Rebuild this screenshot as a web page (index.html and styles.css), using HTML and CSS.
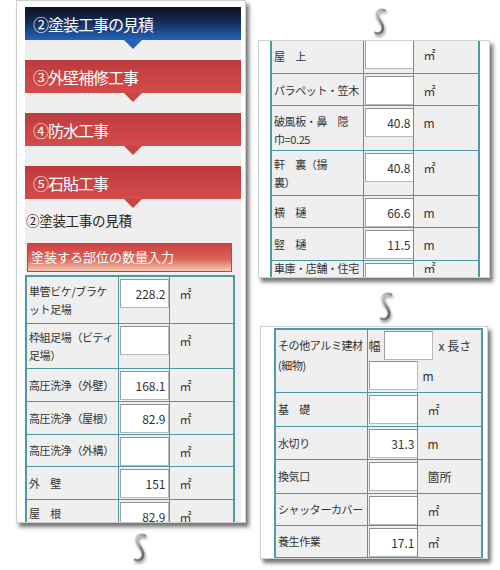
FILE: index.html
```html
<!DOCTYPE html>
<html lang="ja">
<head>
<meta charset="utf-8">
<title>塗装工事の見積</title>
<link rel="stylesheet" href="styles.css">
</head>
<body>
<div class="page">
  <div class="col col-left">
    <div class="panel panel-main">
      <div class="inner">
        <div class="step step-blue">②塗装工事の見積</div>
        <div class="step step-red">③外壁補修工事</div>
        <div class="step step-red">④防水工事</div>
        <div class="step step-red step-last">⑤石貼工事</div>
        <div class="subtitle">②塗装工事の見積</div>
        <div class="section-bar">塗装する部位の数量入力</div>
        <table class="qty qty-main">
          <colgroup><col class="c-lbl"><col class="c-inp"><col class="c-unit"></colgroup>
          <tr class="h47"><td class="lbl">単管ビケ/ブラケ<br>ット足場</td><td class="inp"><div class="box">228.2</div></td><td class="unit">㎡</td></tr>
          <tr class="h45"><td class="lbl">枠組足場（ビティ<br>足場）</td><td class="inp"><div class="box"></div></td><td class="unit">㎡</td></tr>
          <tr class="h33"><td class="lbl">高圧洗浄（外壁）</td><td class="inp"><div class="box">168.1</div></td><td class="unit">㎡</td></tr>
          <tr class="h33"><td class="lbl">高圧洗浄（屋根）</td><td class="inp"><div class="box">82.9</div></td><td class="unit">㎡</td></tr>
          <tr class="h32"><td class="lbl">高圧洗浄（外構）</td><td class="inp"><div class="box"></div></td><td class="unit">㎡</td></tr>
          <tr class="h33"><td class="lbl">外　壁</td><td class="inp"><div class="box">151</div></td><td class="unit">㎡</td></tr>
          <tr class="h33"><td class="lbl lbl-last">屋　根</td><td class="inp"><div class="box">82.9</div></td><td class="unit">㎡</td></tr>
        </table>
      </div>
    </div>
    <svg class="squig squig-left" viewBox="0 0 16 30" width="16" height="30"><defs><linearGradient id="sg" x1="0" y1="0" x2="1" y2="1"><stop offset="0" stop-color="#dcdcdc"/><stop offset="0.5" stop-color="#8e8e8e"/><stop offset="1" stop-color="#555"/></linearGradient></defs><path d="M13 2.5 C 8 0.5, 3 3, 5 8.5 C 7 13.5, 12 17, 11 22.5 C 10 27.5, 5 28, 3 26.5" fill="none" stroke="url(#sg)" stroke-width="2.6" stroke-linecap="round"/></svg>
  </div>
  <div class="col col-right">
    <svg class="squig squig-top" viewBox="0 0 16 30" width="16" height="28"><path d="M13 2.5 C 8 0.5, 3 3, 5 8.5 C 7 13.5, 12 17, 11 22.5 C 10 27.5, 5 28, 3 26.5" fill="none" stroke="url(#sg)" stroke-width="2.6" stroke-linecap="round"/></svg>
    <div class="panel panel-b">
      <table class="qty qty-b">
        <colgroup><col class="c-lbl"><col class="c-inp2"><col class="c-unit2"></colgroup>
        <tr class="h36"><td class="lbl">屋　上</td><td class="inp"><div class="box"></div></td><td class="unit">㎡</td></tr>
        <tr class="h32"><td class="lbl">パラペット・笠木</td><td class="inp"><div class="box"></div></td><td class="unit">㎡</td></tr>
        <tr class="h45"><td class="lbl lbl-low">破風板・鼻　隠<br>巾=0.25</td><td class="inp"><div class="box">40.8</div></td><td class="unit">m</td></tr>
        <tr class="h45"><td class="lbl">軒　裏（揚<br>裏）</td><td class="inp"><div class="box">40.8</div></td><td class="unit">㎡</td></tr>
        <tr class="h32"><td class="lbl">横　樋</td><td class="inp"><div class="box">66.6</div></td><td class="unit">m</td></tr>
        <tr class="h33"><td class="lbl">竪　樋</td><td class="inp"><div class="box">11.5</div></td><td class="unit">m</td></tr>
        <tr class="h33"><td class="lbl lbl-top">車庫・店舗・住宅</td><td class="inp"><div class="box"></div></td><td class="unit unit-top">㎡</td></tr>
      </table>
    </div>
    <svg class="squig squig-mid" viewBox="0 0 16 30" width="16" height="30"><path d="M13 2.5 C 8 0.5, 3 3, 5 8.5 C 7 13.5, 12 17, 11 22.5 C 10 27.5, 5 28, 3 26.5" fill="none" stroke="url(#sg)" stroke-width="2.6" stroke-linecap="round"/></svg>
    <div class="panel panel-c">
      <table class="qty qty-c">
        <colgroup><col class="c-lbl"><col class="c-inp2"><col class="c-unit3"></colgroup>
        <tr class="h63"><td class="lbl lbl-first">その他アルミ建材<br>(細物)</td>
          <td class="inp wide" colspan="2">
            <div class="line line1"><span class="txt">幅</span><div class="box"></div><span class="txt">x 長さ</span></div>
            <div class="line line2"><div class="box"></div><span class="txt">m</span></div>
          </td></tr>
        <tr class="h34"><td class="lbl">基　礎</td><td class="inp"><div class="box"></div></td><td class="unit">㎡</td></tr>
        <tr class="h33"><td class="lbl">水切り</td><td class="inp"><div class="box">31.3</div></td><td class="unit">m</td></tr>
        <tr class="h34"><td class="lbl">換気口</td><td class="inp"><div class="box"></div></td><td class="unit">箇所</td></tr>
        <tr class="h32"><td class="lbl">シャッターカバー</td><td class="inp"><div class="box"></div></td><td class="unit">㎡</td></tr>
        <tr class="h33"><td class="lbl">養生作業</td><td class="inp"><div class="box">17.1</div></td><td class="unit">㎡</td></tr>
      </table>
    </div>
  </div>
</div>
</body>
</html>
```
FILE: styles.css
```css
html, body {
  margin: 0;
  padding: 0;
  background: #ffffff;
}

body {
  font-family: "Noto Sans CJK JP", "Noto Sans", sans-serif;
  color: #333;
}

.page {
  width: 500px;
  height: 570px;
  overflow: hidden;
  box-sizing: border-box;
  padding-left: 16px;
  display: grid;
  grid-template-columns: 230px 232px;
  column-gap: 12px;
  align-items: start;
}

.col {
  display: flex;
  flex-direction: column;
}

.panel {
  background: #ffffff;
  border: 1px solid #d0d0d0;
  box-sizing: border-box;
  overflow: hidden;
  box-shadow: 3px 4px 4px rgba(0, 0, 0, 0.55);
}

.panel-main {
  height: 523px;
  padding: 6px 4px 0 8px;
}

.inner {
  background: #efefef;
  height: 100%;
}

.step {
  height: 33px;
  margin-bottom: 20px;
  padding-left: 8px;
  display: flex;
  align-items: center;
  color: #ffffff;
  font-size: 16px;
  letter-spacing: -1px;
  position: relative;
}

.step::after {
  content: "";
  position: absolute;
  left: 50%;
  top: 100%;
  transform: translateX(-50%);
  border-left: 9px solid transparent;
  border-right: 9px solid transparent;
  border-top: 9px solid #c94444;
}

.step-blue {
  background: linear-gradient(#0d1322 0%, #12294f 40%, #2363bd 100%);
}

.step-blue::after {
  border-top-color: #2262bc;
}

.step-red {
  background: linear-gradient(#bd3b3d 0%, #c94446 50%, #d44c4a 100%);
}

.step-last {
  margin-bottom: 10px;
}

.subtitle {
  font-size: 13.5px;
  line-height: 22px;
  letter-spacing: -0.3px;
  color: #222;
  padding-left: 1px;
  margin-bottom: 12px;
}

.section-bar {
  margin: 0 0 3px 2px;
  width: 205px;
  height: 29px;
  box-sizing: border-box;
  border: 1px solid #c4423e;
  background: linear-gradient(#cd4243 0%, #da6457 55%, #f5cab5 100%);
  color: #ffffff;
  font-size: 13px;
  line-height: 26px;
  padding-left: 3px;
}

/* tables */
.qty {
  border-collapse: collapse;
  table-layout: fixed;
  background: #efefef;
  border: 2px solid #4e99a4;
}

.qty td {
  border: 1px solid #4e99a4;
  padding: 0;
  font-size: 11px;
  color: #333;
}

.qty-main { width: 208px; }
.qty-b { width: 208px; margin-top: -4px; border-top: none; }
.qty-c { width: 207px; }

.c-lbl { width: 92px; }
.c-inp { width: 51px; }
.c-unit { width: 65px; }
.c-inp2 { width: 50px; }
.c-unit2 { width: 66px; }
.c-unit3 { width: 65px; }

.h32 { height: 32px; }
.h33 { height: 33px; }
.h34 { height: 34px; }
.h36 { height: 36px; }
.h45 { height: 45px; }
.h47 { height: 47px; }
.h63 { height: 63px; }

.lbl {
  padding: 0 1px 0 2px !important;
  line-height: 18px;
  letter-spacing: -0.4px;
  vertical-align: middle;
  white-space: nowrap;
  overflow: hidden;
}

.lbl-low {
  vertical-align: bottom !important;
  padding-bottom: 2px !important;
}

.lbl-top {
  vertical-align: top !important;
  padding-top: 0 !important;
  line-height: 14px;
}

.lbl-last {
  vertical-align: top !important;
  padding-top: 4px !important;
}

.lbl-first {
  vertical-align: top !important;
  padding-top: 5px !important;
  line-height: 20px;
}

.inp {
  vertical-align: top;
  padding: 2px 0 0 1px !important;
}

.box {
  width: 49px;
  height: 29px;
  box-sizing: border-box;
  border: 1px solid #b8b8b8;
  border-top-color: #909090;
  border-left-color: #a0a0a0;
  background: #ffffff;
  text-align: right;
  font-size: 12px;
  line-height: 27px;
  padding-right: 2px;
  color: #333;
}

.unit {
  vertical-align: top;
  padding: 2px 0 0 10px !important;
  line-height: 29px;
  font-size: 12px !important;
}

.unit-top {
  padding-top: 0 !important;
  line-height: 14px;
}

.wide {
  padding: 1px 0 0 1px !important;
}

.line {
  display: flex;
  align-items: center;
}

.line1 {
  gap: 3px;
}

.line1 .txt:last-child {
  margin-left: 3px;
}

.line2 {
  gap: 5px;
  margin-top: 1px;
}

.txt {
  font-size: 12px;
  color: #333;
  white-space: nowrap;
}

.panel-b {
  height: 238px;
  margin-top: 4px;
  padding-left: 11px;
}

.panel-c {
  width: 228px;
  height: 233px;
  margin: 4px 0 0 2px;
  padding: 1px 0 0 13px;
}

/* squiggle connectors */
.squig {
  display: block;
  filter: drop-shadow(1px 2px 1.5px rgba(0, 0, 0, 0.45));
}

.squig-left {
  margin: 10px 0 0 116px;
}

.squig-top {
  margin: 8px 0 0 114px;
}

.squig-mid {
  margin: 14px 0 0 120px;
}
```
